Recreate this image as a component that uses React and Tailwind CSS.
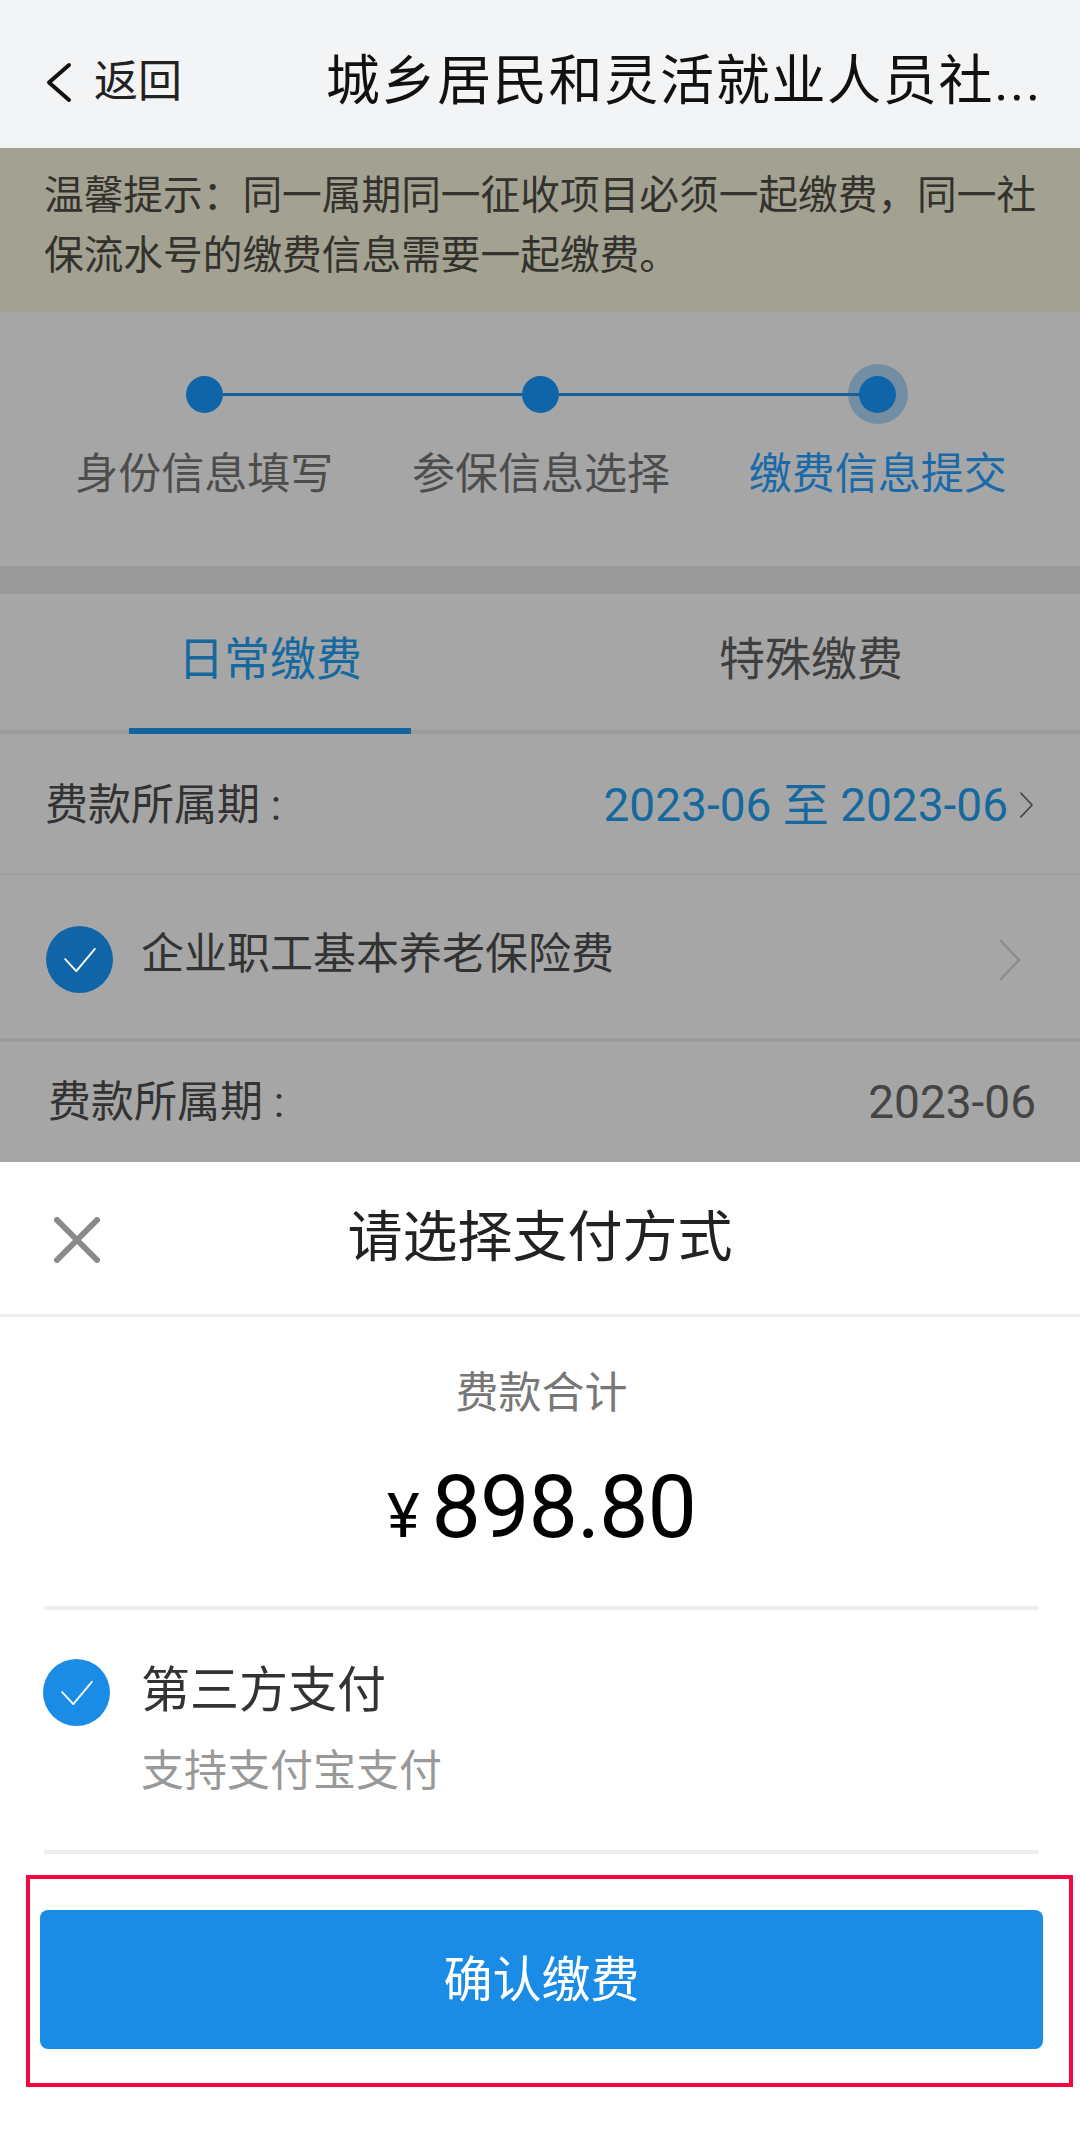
import React from "react";

const steps = [
  { label: "身份信息填写" },
  { label: "参保信息选择" },
  { label: "缴费信息提交", active: true },
];

function Chevron({ className }) {
  return (
    <svg viewBox="0 0 24 42" fill="none" stroke="currentColor" strokeLinecap="round" strokeLinejoin="round" className={className}>
      <path d="M3 2l18 19L3 40" strokeWidth="2.5" />
    </svg>
  );
}

function CheckCircle({ className }) {
  return (
    <div className={`w-[67px] h-[67px] rounded-full shrink-0 flex items-center justify-center ${className}`}>
      <svg viewBox="0 0 36 28" fill="none" stroke="#fff" strokeWidth="2" strokeLinecap="round" strokeLinejoin="round" className="w-[34px] h-[26px]">
        <path d="M2 13l12 13L34 2" />
      </svg>
    </div>
  );
}

export default function App() {
  return (
    <div className="w-[1080px] h-[2152px] bg-white overflow-hidden flex flex-col font-['Roboto','Noto_Sans_CJK_SC',sans-serif]">
      {/* Header */}
      <div className="h-[148px] shrink-0 bg-[#f3f4f6] flex items-center pl-[45px] pr-[38px] pt-[16px]">
        <svg viewBox="0 0 27 41" fill="none" stroke="#111" strokeWidth="4" strokeLinecap="round" strokeLinejoin="round" className="w-[27px] h-[41px]">
          <path d="M24 3L4 20.5 24 38" />
        </svg>
        <span className="ml-[22px] text-[44px] leading-none text-[#222]">返回</span>
        <span className="ml-auto text-[54px] leading-none tracking-[1.7px] text-[#111] whitespace-nowrap">城乡居民和灵活就业人员社...</span>
      </div>

      {/* Tip */}
      <div className="h-[164px] shrink-0 bg-[#a3a192] px-[44px] pt-[18px] text-[39.7px] leading-[60px] text-[#33322c]">
        <div className="whitespace-nowrap">温馨提示：同一属期同一征收项目必须一起缴费，同一社</div>
        <div className="whitespace-nowrap">保流水号的缴费信息需要一起缴费。</div>
      </div>

      {/* Steps */}
      <div className="h-[254px] shrink-0 bg-[#a6a6a6] pt-[52px]">
        <div className="relative grid grid-cols-3 ml-[36px] w-[1010px]">
          <div className="absolute left-[168px] w-[673px] top-[29px] h-[3px] bg-[#14619f]" />
          {steps.map((s) => (
            <div key={s.label} className="relative flex flex-col items-center">
              <div className={`w-[60px] h-[60px] rounded-full flex items-center justify-center ${s.active ? "bg-[#14619f]/35" : ""}`}>
                <div className="w-[37px] h-[37px] rounded-full bg-[#0f65a8]" />
              </div>
              <div className={`mt-[24px] text-[43px] leading-[52px] whitespace-nowrap ${s.active ? "text-[#1a6aa9]" : "text-[#4d4d4d]"}`}>{s.label}</div>
            </div>
          ))}
        </div>
      </div>

      <div className="h-[28px] shrink-0 bg-[#9a9a9a]" />

      {/* Tabs */}
      <div className="h-[140px] shrink-0 bg-[#a6a6a6] border-b-[4px] border-[#9b9b9b] flex">
        <div className="relative w-[540px] flex justify-center pt-[41px] text-[46px] leading-[48px] text-[#16699f]">
          日常缴费
          <div className="absolute left-[129px] w-[282px] -bottom-[4px] h-[6px] bg-[#14659f]" />
        </div>
        <div className="w-[540px] flex justify-center pt-[41px] text-[46px] leading-[48px] text-[#3f3f3f] pl-[2px]">特殊缴费</div>
      </div>

      {/* Period row */}
      <div className="h-[141px] shrink-0 bg-[#a6a6a6] border-b-[2px] border-[#a0a0a0] flex items-center pl-[45px] pr-[46px] pt-[3px]">
        <span className="text-[43px] text-[#333] whitespace-nowrap">费款所属期 :</span>
        <span className="ml-auto text-[46px] text-[#16699f] whitespace-nowrap">2023-06 至 2023-06</span>
        <Chevron className="ml-[11px] w-[15px] h-[28px] text-[#444]" />
      </div>

      {/* Insurance row */}
      <div className="h-[167px] shrink-0 bg-[#a6a6a6] border-b-[4px] border-[#9b9b9b] flex items-center pl-[46px] pr-[58px] pt-[6px]">
        <CheckCircle className="bg-[#0f65a8]" />
        <span className="ml-[28px] -mt-[10px] text-[43px] text-[#333] whitespace-nowrap">企业职工基本养老保险费</span>
        <Chevron className="ml-auto w-[24px] h-[42px] text-[#8d8d8d]" />
      </div>

      <div className="h-[120px] shrink-0 bg-[#a6a6a6] flex items-center pl-[48px] pr-[44px]">
        <span className="text-[43px] text-[#333] whitespace-nowrap">费款所属期 :</span>
        <span className="ml-auto text-[46px] text-[#444]">2023-06</span>
      </div>

      {/* Payment sheet */}
      <div className="flex-1 bg-white flex flex-col">
        <div className="h-[155px] shrink-0 border-b-[3px] border-[#eeeeee] flex items-center relative">
          <svg viewBox="0 0 46 46" fill="none" stroke="#8a8a8a" strokeWidth="6" strokeLinecap="round" className="absolute left-[54px] top-[55px] w-[46px] h-[46px]">
            <path d="M3 3l40 40M43 3L3 43" />
          </svg>
          <span className="w-full text-center text-[55px] leading-none text-[#222] -mt-[2px]">请选择支付方式</span>
        </div>

        <div className="ml-[44px] mr-[41px] h-[293px] shrink-0 border-b-[4px] border-[#eeeeee] flex flex-col items-center">
          <div className="mt-[51px] text-[43px] leading-[50px] text-[#777]">费款合计</div>
          <div className="mt-[45px] flex items-baseline text-black leading-none">
            <span className="text-[62px] leading-none">¥</span>
            <span className="ml-[12px] text-[88px] leading-none tracking-[-1px]">898.80</span>
          </div>
        </div>

        <div className="ml-[44px] mr-[41px] h-[244px] shrink-0 border-b-[4px] border-[#eeeeee] flex">
          <CheckCircle className="mt-[49px] -ml-[1px] bg-[#1a8ce5]" />
          <div className="ml-[31px] pt-[51px]">
            <div className="text-[49px] leading-[60px] text-[#333]">第三方支付</div>
            <div className="mt-[25px] text-[43px] leading-[50px] text-[#999]">支持支付宝支付</div>
          </div>
        </div>

        {/* Red outline is an annotation around the confirm button */}
        <div className="mt-[21px] ml-[26px] w-[1047px] h-[212px] border-[4px] border-[#f5063f] pl-[10px] pr-[26px] pt-[31px]">
          <div className="h-[139px] w-[1003px] rounded-[8px] bg-[#1a8ce5] flex items-center justify-center text-[49px] text-white pt-[3px]">确认缴费</div>
        </div>
      </div>
    </div>
  );
}
